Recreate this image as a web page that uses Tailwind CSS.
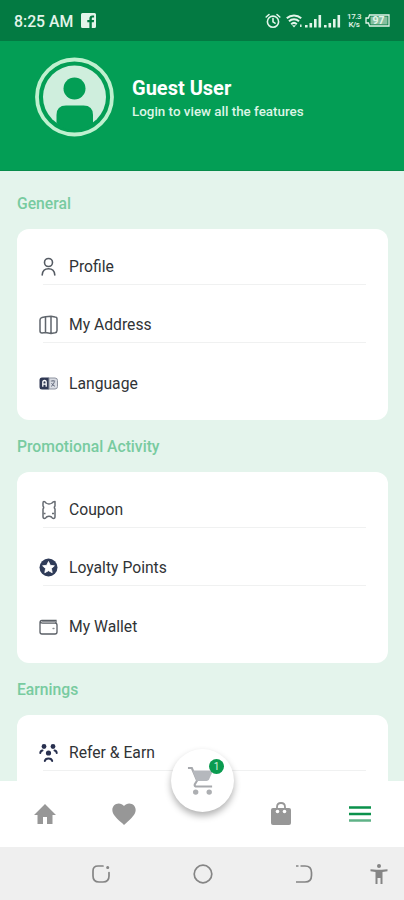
<!doctype html>
<html lang="en">
<head>
    <meta charset="UTF-8">
    <title>Menu</title>
    <script src="https://cdn.jsdelivr.net/npm/@tailwindcss/browser@4"></script>
</head>
<body class="font-['Roboto',sans-serif]">
<div class="relative flex flex-col w-[404px] h-[900px] overflow-hidden bg-[#e4f4ec]">

    <!-- Status bar -->
    <div class="h-[41px] shrink-0 bg-[#037a42] flex items-center pl-[14px] pr-[14px] text-[#e3f5ea]">
        <span class="pt-0.5 text-[15.8px] leading-5 font-medium w-[61px] whitespace-nowrap">8:25 AM</span>
        <svg class="w-[15px] h-[15px] ml-[6px]" viewBox="0 0 15 15" fill="currentColor">
            <path fill-rule="evenodd" d="M1.500 0h12A1.500 1.500 0 0 1 15 1.500v12a1.500 1.500 0 0 1-1.500 1.500h-2.700V9.300h2l.3-2.200h-2.300V5.700c0-.7.3-1.100 1.100-1.100h1.200V2.500h-1.700c-2 0-3 1.200-3 3v1.600H6.300v2.200h2.100V15H1.500A1.500 1.500 0 0 1 0 13.500v-12A1.500 1.500 0 0 1 1.500 0z" />
        </svg>
        <svg class="w-4 h-4 ml-auto" viewBox="0 0 16 16" fill="none" stroke="currentColor" stroke-width="1.600" stroke-linecap="round">
            <circle cx="8" cy="8.700" r="5.600" />
            <path d="M8 5.600v3.300l2 1.300M1.200 4l2.800-2.500M14.800 4L12 1.500" />
        </svg>
        <svg class="w-[17px] h-4 ml-[5px]" viewBox="0 0 17 16" fill="none" stroke="currentColor" stroke-width="2">
            <path d="M.8 5.200c4-3.700 10.400-3.700 14.400 0M3 8.300c2.800-2.600 7.200-2.600 10 0M5.200 11.200c1.600-1.500 4-1.500 5.600 0" />
            <path d="M6 12.200h4L8 14.500z" fill="currentColor" stroke="none" />
            <path d="M14.800 11.500v2.500" stroke-width="1.500" />
        </svg>
        <svg class="w-9 h-[14px] ml-0.5" viewBox="0 0 36 14" fill="currentColor">
            <path d="M0 11h2.600v2.500H0zM4.500 9h2.600v4.500H4.500zM9 5h2.600v8.500H9zM13.500 1h2.600v12.500h-2.600zM19 11h2.600v2.500H19zM23.500 9h2.600v4.500h-2.600zM28 5h2.600v8.500H28zM32.500 1h2.600v12.500h-2.600z" />
        </svg>
        <div class="w-[14px] ml-[6px] text-[8px] leading-[8px] font-medium text-center whitespace-nowrap tracking-tighter">17.3<br>K/s</div>
        <svg class="w-[25px] h-[13px] ml-1" viewBox="0 0 25 13">
            <path d="M4.500 1H24v11H4.500L3.500 9H1V4h2.500z" fill="none" stroke="currentColor" stroke-width="1.300" />
            <path d="M5.500 2.500H22.500v8H5.500z" fill="#86bf9f" />
            <text x="13.500" y="10.300" text-anchor="middle" font-size="10.500" font-weight="700" fill="#e3f5ea">97</text>
        </svg>
    </div>

    <!-- User header -->
    <div class="h-[130px] shrink-0 bg-[#039e55] border-b border-[#078c4c] flex items-start pl-[35px] pt-4">
        <svg class="w-20 h-20" viewBox="0 0 80 80">
            <circle cx="39.500" cy="40" r="37.500" fill="none" stroke="#bff0cf" stroke-width="3.800" />
            <circle cx="39.500" cy="40" r="31.500" fill="#cfeedd" />
            <circle cx="39.500" cy="31.500" r="11" fill="#039e55" />
            <path d="M21.500 66V58q0-9.500 9.500-9.500h17.500q9.500 0 9.500 9.500v8q-8 7.800-18.200 7.800T21.500 66z" fill="#039e55" />
        </svg>
        <div class="ml-[17px] pt-[19px]">
            <div class="text-[20px] leading-6 font-bold text-white">Guest User</div>
            <div class="mt-[4px] text-[13.4px] leading-4 font-medium text-[#ddf5e6]">Login to view all the features</div>
        </div>
    </div>

    <!-- Menu sections -->
    <div class="flex flex-col pl-[17px] pr-4 pt-5 text-[#303336]">
        <h2 class="h-6 leading-[25px] text-[15.7px] font-medium text-[#78cba0]">General</h2>
        <div class="mt-[14px] h-[191px] bg-white rounded-xl px-[22px] pt-[19px]">
            <div class="relative h-[37px] flex items-center text-[15.7px]">
                <svg class="w-[18px] h-5 mr-3" viewBox="0 0 18 20" fill="none" stroke="#555b63" stroke-width="1.600" stroke-linecap="round">
                    <circle cx="9.500" cy="5.500" r="4" />
                    <path d="M3.200 18c.3-4 2.800-6.200 6.300-6.200s6 2.200 6.300 6.200" />
                </svg>
                <span class="pt-px">Profile</span>
                <span class="absolute left-1 right-0 bottom-0 h-px bg-[#f0f1f1]"></span>
            </div>
            <div class="relative mt-[21px] h-[37px] flex items-center text-[15.7px]">
                <svg class="w-[19px] h-5 mr-[11px]" viewBox="0 0 19 20" fill="none" stroke="#60666d" stroke-width="1.500" stroke-linejoin="round">
                    <path d="M6.500 1.800L3 2.500Q1 3 1 5v11q0 2 2 2l3.500-.5 5.500 1 4-.7q2-.4 2-2.300V4q0-2-2-2l-4-.8-5.500.6v15.700M12 1.500v17" />
                </svg>
                <span class="pt-px">My Address</span>
                <span class="absolute left-1 right-0 bottom-0 h-px bg-[#f0f1f1]"></span>
            </div>
            <div class="mt-[22px] h-[37px] flex items-center text-[15.7px]">
                <svg class="w-[19px] h-[13px] mr-[11px]" viewBox="0 0 19 13">
                    <path d="M3 .5h7v12H3Q.5 12.500.5 10V3Q.5.5 3 .5z" fill="#303854" />
                    <path d="M10 1h6q2.500 0 2.500 2.500v6q0 2.500-2.500 2.500h-6z" fill="#d9dce3" stroke="#8d929f" />
                    <path d="M3.800 9.800V5.500q0-2 1.700-2t1.700 2v4.300M3.800 7.200h3.400" fill="none" stroke="#fff" stroke-width="1.300" />
                    <path d="M11.800 4h4.400M14 3v1M15.500 4.500q-.8 3.500-3.500 5M12.500 6q1 2.500 3.500 3.300" fill="none" stroke="#606779" stroke-width=".9" />
                </svg>
                <span class="pt-px">Language</span>
            </div>
        </div>

        <h2 class="mt-[14px] h-6 leading-[25px] text-[15.7px] font-medium text-[#78cba0]">Promotional Activity</h2>
        <div class="mt-[14px] h-[191px] bg-white rounded-xl px-[22px] pt-[19px]">
            <div class="relative h-[37px] flex items-center text-[15.7px]">
                <svg class="w-[18px] h-5 mr-3" viewBox="0 0 18 20" fill="none" stroke="#666b72" stroke-width="1.500" stroke-linejoin="round">
                    <path d="M5 1.500Q6 1.500 7 3 10 5 13 3 14 1.500 16 1.500V6q-1.300 1.500 0 3v7.500q0 2-1.500 2-1.200 0-2-1.500-2.500-1.500-5 0-.8 1.500-2 1.500-1.500 0-1.500-2V9q1.300-1.500 0-3V3q0-1.500 1-1.500z" />
                    <path d="M4.500 13.500H6.500M13 13.500h2" />
                </svg>
                <span class="pt-px">Coupon</span>
                <span class="absolute left-1 right-0 bottom-0 h-px bg-[#f0f1f1]"></span>
            </div>
            <div class="relative mt-[21px] h-[37px] flex items-center text-[15.7px]">
                <svg class="w-[19px] h-[19px] mr-[11px]" viewBox="0 0 19 19">
                    <circle cx="9.500" cy="9.500" r="9" fill="#2f3b58" />
                    <path d="M9.500 3.500l1.800 3.800 4.100.5-3 2.800.8 4.100-3.700-2-3.700 2 .8-4.100-3-2.800 4.100-.5z" fill="#fff" stroke="#fff" stroke-width=".8" stroke-linejoin="round" />
                </svg>
                <span class="pt-px">Loyalty Points</span>
                <span class="absolute left-1 right-0 bottom-0 h-px bg-[#f0f1f1]"></span>
            </div>
            <div class="mt-[22px] h-[37px] flex items-center text-[15.7px]">
                <svg class="w-[19px] h-4 mr-[11px]" viewBox="0 0 19 16" fill="none" stroke="#5a5f66" stroke-width="1.300" stroke-linecap="round">
                    <path d="M17 4V1.300H3Q1 1.500 1 3.500V13q0 2 2 2h13q2 0 2-2V6q0-1.800-2-1.800H3.500Q1.500 4 1.500 2.500" />
                    <path d="M3.500 2.700H16" stroke="#8b8f94" />
                    <path d="M14 9.500h1" stroke="#8b8f94" />
                </svg>
                <span class="pt-px">My Wallet</span>
            </div>
        </div>

        <h2 class="mt-[14px] h-6 leading-[25px] text-[15.7px] font-medium text-[#78cba0]">Earnings</h2>
        <div class="mt-[14px] h-[191px] bg-white rounded-xl px-[22px] pt-[19px]">
            <div class="relative h-[37px] flex items-center text-[15.7px]">
                <svg class="w-[19px] h-5 mr-[11px]" viewBox="0 0 19 20" fill="#28304f">
                    <circle cx="5" cy="3.500" r="2.400" />
                    <circle cx="14" cy="3.500" r="2.400" />
                    <circle cx="9.500" cy="10" r="2.600" />
                    <path d="M1.300 10Q1.500 7.800 3.500 7.500M17.700 10Q17.500 7.800 15.500 7.500M5.800 18q.5-2.600 3.700-2.600t3.700 2.600" fill="none" stroke="#28304f" stroke-width="2" stroke-linecap="round" />
                </svg>
                <span class="pt-px">Refer &amp; Earn</span>
                <span class="absolute left-1 right-0 bottom-0 h-px bg-[#f0f1f1]"></span>
            </div>
        </div>
    </div>

    <!-- Bottom bars, laid over the scrolling list -->
    <div class="absolute inset-x-0 bottom-0">
        <div class="relative h-[66px] bg-white grid grid-cols-[90px_68px_88px_70px_88px] items-center justify-items-center text-[#979797]">
            <svg class="w-6 h-6" viewBox="0 0 24 24" fill="currentColor">
                <path d="M10 22v-7h4v7h5.500v-9H23L12 2 1 13h3.500v9z" />
            </svg>
            <svg class="w-7 h-7" viewBox="0 0 24 24" fill="currentColor">
                <path d="M12 21.350l-1.450-1.320C5.400 15.360 2 12.280 2 8.500 2 5.420 4.420 3 7.500 3c1.740 0 3.410.81 4.500 2.090C13.090 3.810 14.760 3 16.500 3 19.580 3 22 5.420 22 8.500c0 3.780-3.400 6.860-8.550 11.540z" />
            </svg>
            <span></span>
            <svg class="w-6 h-6" viewBox="0 0 24 24" fill="none">
                <path d="M4 6h16q2 0 2 2v13q0 2-2 2H4q-2 0-2-2V8q0-2 2-2z" fill="currentColor" />
                <path d="M8 7V5q0-4 4-4t4 4v2" stroke="currentColor" stroke-width="1.800" />
                <circle cx="8.500" cy="9.500" r="1.800" fill="#fff" />
                <circle cx="15.500" cy="9.500" r="1.800" fill="#fff" />
            </svg>
            <svg class="w-[22px] h-4" viewBox="0 0 22 16">
                <path d="M0 1.500h22M0 8h22" stroke="#0a914b" stroke-width="2.500" />
                <path d="M0 14.500h22" stroke="#5fb287" stroke-width="2.500" />
            </svg>
            <div class="absolute left-[171px] -top-8 w-[63px] h-[63px] rounded-full bg-white shadow-[0_4px_7px_rgba(0,0,0,0.3)]">
                <svg class="absolute left-4 top-[17px] w-7 h-[30px]" viewBox="0 0 29 30">
                    <path d="M1 1.500h4l5.500 13-2.500 4q-.5 2.200 2 2.200h16" fill="none" stroke="#a7a9ad" stroke-width="2.200" />
                    <path d="M5.500 4H27l-4.200 9.500q-.7 1.500-2.500 1.500H10z" fill="#b5b8bd" />
                    <circle cx="9" cy="26.500" r="2.800" fill="#adafb2" />
                    <circle cx="23" cy="26.500" r="2.800" fill="#adafb2" />
                </svg>
                <span class="absolute left-[38px] top-[10px] w-[15px] h-[15px] rounded-full bg-[#0a9b50] text-[10px] leading-[15px] text-center text-[#d5f2df]">1</span>
            </div>
        </div>
        <div class="h-[53px] bg-[#efefef] grid grid-cols-[202px_1fr_50px] text-[#858585]">
            <svg class="self-center justify-self-center w-5 h-5" viewBox="0 0 20 20" fill="none" stroke="currentColor" stroke-width="1.700" stroke-linecap="round">
                <path d="M12 2H7Q2 2 2 7v5q0 6 6 6h4q6 0 6-6V8.500" />
                <circle cx="16.700" cy="3.500" r=".7" fill="currentColor" />
            </svg>
            <div class="flex items-center">
                <svg class="w-5 h-5 -ml-[9px]" viewBox="0 0 20 20" fill="none" stroke="currentColor" stroke-width="1.700">
                    <circle cx="10" cy="10" r="8.800" />
                </svg>
                <svg class="w-[18px] h-5 ml-[82px]" viewBox="0 0 18 20" fill="none" stroke="currentColor" stroke-width="1.700">
                    <path d="M1 2h2.500M5.500 2H10q6.500 0 6.500 6.500v3Q16.500 18 10 18H1" />
                </svg>
            </div>
            <svg class="self-center justify-self-center w-[18px] h-5" viewBox="0 0 18 20" fill="currentColor">
                <circle cx="9" cy="2" r="2" />
                <path d="M.5 5.200l6 .5h5l6-.5v2l-5 .8v12h-2v-6h-3v6h-2V8l-5-.8z" />
            </svg>
        </div>
    </div>
</div>
</body>
</html>
